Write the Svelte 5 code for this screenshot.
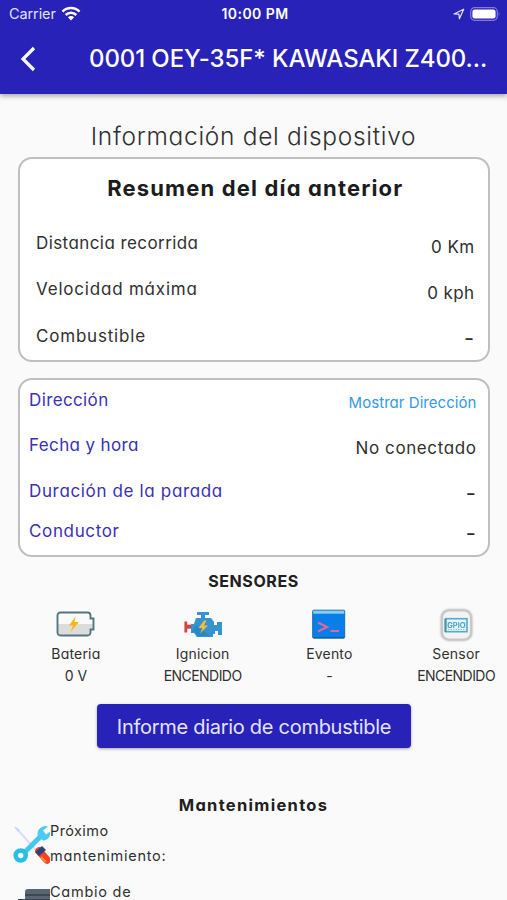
<script lang="ts">
  const title = '0001 OEY-35F* KAWASAKI Z400...'

  const summary = [
    { label: 'Distancia recorrida', value: '0 Km', id: 'distance' },
    { label: 'Velocidad máxima', value: '0 kph', id: 'speed' },
    { label: 'Combustible', value: '-', id: 'fuel' }
  ]

  const details = [
    { label: 'Dirección', value: 'Mostrar Dirección', id: 'address' },
    { label: 'Fecha y hora', value: 'No conectado', id: 'date' },
    { label: 'Duración de la parada', value: '-', id: 'stop' },
    { label: 'Conductor', value: '-', id: 'driver' }
  ]

  const sensors = [
    { name: 'Bateria', value: '0 V', icon: 'battery' },
    { name: 'Ignicion', value: 'ENCENDIDO', icon: 'engine' },
    { name: 'Evento', value: '-', icon: 'terminal' },
    { name: 'Sensor', value: 'ENCENDIDO', icon: 'gpio' }
  ]
</script>

<div class="screen">
  <header>
    <div class="status">
      <div class="carrier">
        <span>Carrier</span>
        <svg width="20" height="15" viewBox="0 0 20 15">
          <g fill="none" stroke="#fff" stroke-width="2.5">
            <path d="M1.5 5.6a12 12 0 0 1 17 0" />
            <path d="M4.7 9a7.5 7.5 0 0 1 10.6 0" />
          </g>
          <path d="M10 14.4l-3.1-3.2a4.4 4.4 0 0 1 6.2 0z" fill="#fff" />
        </svg>
      </div>
      <span class="clock">10:00 PM</span>
      <div class="power">
        <svg width="12" height="12" viewBox="0 0 12 12">
          <path d="M1 6 10.7 1.2 6.4 10.8 6 6.2z" fill="none" stroke="#e4e2ff" stroke-width="1.2" stroke-linejoin="round" />
        </svg>
        <svg width="31" height="14" viewBox="0 0 31 14">
          <rect x="0.7" y="0.7" width="26.6" height="12.6" rx="4" fill="none" stroke="#817cdb" stroke-width="1.2" />
          <rect x="2.4" y="2.4" width="23.2" height="9.2" rx="2.4" fill="#fff" />
          <path d="M28.7 4.7q1.7 2.3 0 4.6z" fill="#817cdb" />
        </svg>
      </div>
    </div>
    <div class="appbar">
      <svg width="16" height="26" viewBox="0 0 16 26">
        <path d="M14 2 3 13l11 11" fill="none" stroke="#fff" stroke-width="3.2" />
      </svg>
      <h1>{title}</h1>
    </div>
  </header>

  <main>
    <h2>Información del dispositivo</h2>

    <section class="card summary">
      <h3>Resumen del día anterior</h3>
      {#each summary as row}
        <div class="row {row.id}">
          <span class="label">{row.label}</span>
          <span class="value" class:dash={row.value === '-'}>{row.value}</span>
        </div>
      {/each}
    </section>

    <section class="card details">
      {#each details as row}
        <div class="row {row.id}">
          <span class="label">{row.label}</span>
          <span class="value" class:dash={row.value === '-'}>{row.value}</span>
        </div>
      {/each}
    </section>

    <h4 class="sensors-title">SENSORES</h4>
    <div class="sensors">
      {#each sensors as sensor}
        <div class="sensor">
          {#if sensor.icon === 'battery'}
            <svg width="40" height="36" viewBox="0 0 40 36">
              <path d="M4.5 6.5h27a3 3 0 0 1 3 3v3h3v11h-3v3a3 3 0 0 1-3 3h-27a3 3 0 0 1-3-3v-17a3 3 0 0 1 3-3z" fill="#fafafa" />
              <path d="M2 18h35v5h-3v3q0 3-3 3H5q-3 0-3-3z" fill="#dcdcdc" />
              <path d="M4.5 6.5h27a3 3 0 0 1 3 3v3h3v11h-3v3a3 3 0 0 1-3 3h-27a3 3 0 0 1-3-3v-17a3 3 0 0 1 3-3z" fill="none" stroke="#54777f" stroke-width="1.9" />
              <path d="M19.5 10.5 13 19.5h4L14.5 26 23 16h-4.5z" fill="#f8b617" />
            </svg>
          {:else if sensor.icon === 'engine'}
            <svg width="40" height="36" viewBox="0 0 40 36">
              <path d="M2.8 15.5v11" stroke="#d8433b" stroke-width="2.8" fill="none" />
              <path d="M3 20.7h5" stroke="#d8433b" stroke-width="4" fill="none" />
              <path d="M14 6h12v3h-4v3h6l3 4v3h3v-3h5v13h-4v-4h-3v3h-2v3H14l-3-4H8v-9h3l2-6h5V9h-4z" fill="#3593d0" />
              <path d="M13 19 27 30H15l-3-4H9l4-7z" fill="#267cba" opacity=".55" />
              <path d="M21 14.5 15.5 22h4L17 27.5l8-8h-4l2.5-5z" fill="#f5bc3b" />
            </svg>
          {:else if sensor.icon === 'terminal'}
            <svg width="40" height="36" viewBox="0 0 40 36">
              <rect x="3.7" y="4.2" width="32" height="28" rx="1" fill="#087ee8" stroke="#236ba5" />
              <path d="M4.2 4.7h31v3h-31z" fill="#83ceee" />
              <path d="M5 31.5h30" stroke="#1060a8" />
              <path d="M9 16.5l9 4.5-9 4.5M21.5 25H30" fill="none" stroke="#e0689a" stroke-width="2.2" />
            </svg>
          {:else}
            <svg class="gpio" width="40" height="36" viewBox="0 0 40 36">
              <rect x="6" y="4.5" width="29" height="29" rx="7" fill="#f3f3f3" stroke="#c8c8c8" stroke-width="2.2" />
              <rect x="9.5" y="12.7" width="21.5" height="13" fill="#e2f5fd" stroke="#55aac7" stroke-width="1.6" />
              <path d="M9.5 13v13" stroke="#43969a" stroke-width="2" />
              <path d="M12 16v6M29 16v6M12 23.5h17" stroke="#91c8dd" stroke-dasharray="1.5 1" />
              <text x="20.4" y="21.7" text-anchor="middle">GPIO</text>
            </svg>
          {/if}
          <span class="name">{sensor.name}</span>
          <span class="reading" class:state={sensor.value === 'ENCENDIDO'}>{sensor.value}</span>
        </div>
      {/each}
    </div>

    <button>Informe diario de combustible</button>

    <h4 class="maintenance-title">Mantenimientos</h4>
    <div class="task">
      <svg width="37" height="40" viewBox="0 0 37 40">
        <path d="M2 2 25 27" stroke="#d7dff6" stroke-width="2" />
        <path d="M1.5 1.5 7 5l-2 2z" fill="#c7d4f1" />
        <path d="M12 27 29 10" stroke="#43c6ee" stroke-width="5" />
        <circle cx="7.7" cy="30.5" r="5" fill="none" stroke="#27bfe4" stroke-width="4.6" />
        <path d="M25 12q-2-7 4-10 3-1.5 6-.5l-5 4 3 4 4-3q1 8-7 9z" fill="#48ccf1" />
        <path d="M26 26 34 35" stroke="#f04427" stroke-width="7.5" stroke-linecap="round" />
        <path d="M22 27l7-6 4 4-7 6z" fill="#304078" />
        <path d="M28 32 33 37" stroke="#ff8b39" stroke-width="2" />
      </svg>
      <p><span class="next">Próximo</span><br /><span class="upkeep">mantenimiento:</span></p>
    </div>
    <div class="task">
      <svg width="37" height="40" viewBox="0 0 37 40">
        <path d="M12 6q0-3 3-3h22v24H5V13h7z" fill="#596572" />
        <path d="M12 9h25M5 14h32" stroke="#3d4751" stroke-width="2" />
      </svg>
      <p><span class="change">Cambio de</span></p>
    </div>
  </main>
</div>

<style>
  :global(body) {
    margin: 0;
    overflow: hidden;
  }

  .screen {
    width: 507px;
    height: 900px;
    overflow: hidden;
    background: #fafafa;
    color: #303030;
    font-family: Inter, 'Open Sans', sans-serif;
    font-feature-settings: 'cv11';
    font-weight: 370;
    font-size: 17px;
  }

  h1,
  h2,
  h3,
  h4,
  p {
    margin: 0;
  }

  svg {
    display: block;
    flex: none;
  }

  span,
  h1 {
    white-space: nowrap;
  }

  header {
    height: 94px;
    background: #2822b8;
    color: #fff;
    box-shadow: 0 2px 5px rgba(0, 0, 0, 0.35);
  }

  .status {
    display: grid;
    grid-template-columns: 1fr auto 1fr;
    align-items: center;
    height: 27px;
    padding: 0 6px 0 9px;
    font-size: 14.5px;
    font-feature-settings: normal;
  }

  .carrier,
  .power {
    display: flex;
    align-items: center;
    gap: 6px;
  }

  .carrier {
    gap: 5px;
    color: #e2e0ff;
    letter-spacing: -0.1px;
  }

  .power {
    justify-content: flex-end;
    gap: 5px;
  }

  .clock {
    font-size: 14px;
    font-weight: 600;
    letter-spacing: 0.45px;
  }

  .appbar {
    display: flex;
    align-items: center;
    height: 64px;
    padding-left: 20px;
  }

  h1 {
    margin-left: 53px;
    font-size: 24px;
    font-weight: 500;
    letter-spacing: -0.1px;
    line-height: 62px;
  }

  h2 {
    height: 63px;
    padding-top: 22px;
    box-sizing: border-box;
    text-align: center;
    font-size: 24.5px;
    font-weight: 350;
    letter-spacing: 0.7px;
    line-height: 41px;
  }

  .card {
    box-sizing: border-box;
    margin: 0 17px 0 17.5px;
    border: 2px solid #bfbfbf;
    border-radius: 14px;
    background: #fff;
  }

  .summary {
    height: 205px;
    padding: 0 13.5px 0 16.5px;
  }

  h3 {
    height: 61px;
    text-align: center;
    font-size: 22px;
    font-weight: 700;
    letter-spacing: 1.15px;
    line-height: 59px;
    color: #1c1c1c;
  }

  .row {
    display: flex;
    justify-content: space-between;
    height: 46.3px;
    line-height: 46px;
  }

  .summary .value {
    padding-top: 4px;
    letter-spacing: 0.4px;
  }

  .distance .label {
    letter-spacing: 0.42px;
  }

  .speed .label,
  .fuel .label {
    letter-spacing: 0.8px;
  }

  .details {
    height: 179px;
    margin-top: 16px;
    padding: 0 11.5px 0 9.5px;
  }

  .details .label {
    padding-top: 1px;
    color: #3a31b5;
    letter-spacing: 0.38px;
  }

  .details .row {
    line-height: 38.5px;
  }

  .details .address {
    height: 45px;
  }

  .details .value {
    padding-top: 4px;
    letter-spacing: 0.6px;
  }

  .details .address .value {
    color: #3399e8;
    font-size: 15px;
    letter-spacing: 0.05px;
  }

  .details .stop .label,
  .details .driver .label {
    letter-spacing: 0.65px;
  }

  .details .stop {
    height: 40px;
  }

  .row .dash {
    font-size: 22px;
  }

  .summary .dash,
  .details .dash {
    padding-top: 2.5px;
  }

  h4 {
    text-align: center;
    font-size: 16px;
    font-weight: 700;
    color: #202020;
  }

  .sensors-title {
    height: 49px;
    line-height: 48px;
    letter-spacing: 0.6px;
  }

  .sensors {
    display: grid;
    grid-template-columns: repeat(4, 1fr);
    margin: 0 -12.5px 0 12.5px;
  }

  .sensor {
    display: flex;
    flex-direction: column;
    align-items: center;
    font-size: 14px;
    line-height: 22px;
  }

  .sensor svg {
    margin-bottom: 1px;
  }

  .name {
    letter-spacing: 0.2px;
  }

  .state {
    letter-spacing: -0.55px;
  }

  .gpio {
    filter: drop-shadow(0 0 1px #aaa);
  }

  .gpio text {
    font-size: 7.5px;
    font-weight: 600;
    fill: #4198c6;
  }

  button {
    display: block;
    width: 314px;
    height: 44px;
    margin: 17px 0 0 97px;
    padding: 1px 0 0;
    border: 0;
    border-radius: 4px;
    background: #2822b8;
    box-shadow: 0 1px 3px rgba(0, 0, 0, 0.35);
    color: #e3e4ff;
    font-family: Inter, sans-serif;
    font-size: 20px;
    letter-spacing: -0.28px;
  }

  .maintenance-title {
    height: 71px;
    line-height: 115px;
    font-size: 16.5px;
    letter-spacing: 1.3px;
  }

  .task {
    display: flex;
    height: 61px;
    padding-left: 13px;
    font-size: 14.5px;
    line-height: 24.5px;
  }

  .task svg {
    margin-top: 6px;
  }

  .next {
    letter-spacing: 0.4px;
  }

  .upkeep,
  .change {
    letter-spacing: 0.75px;
  }
</style>
